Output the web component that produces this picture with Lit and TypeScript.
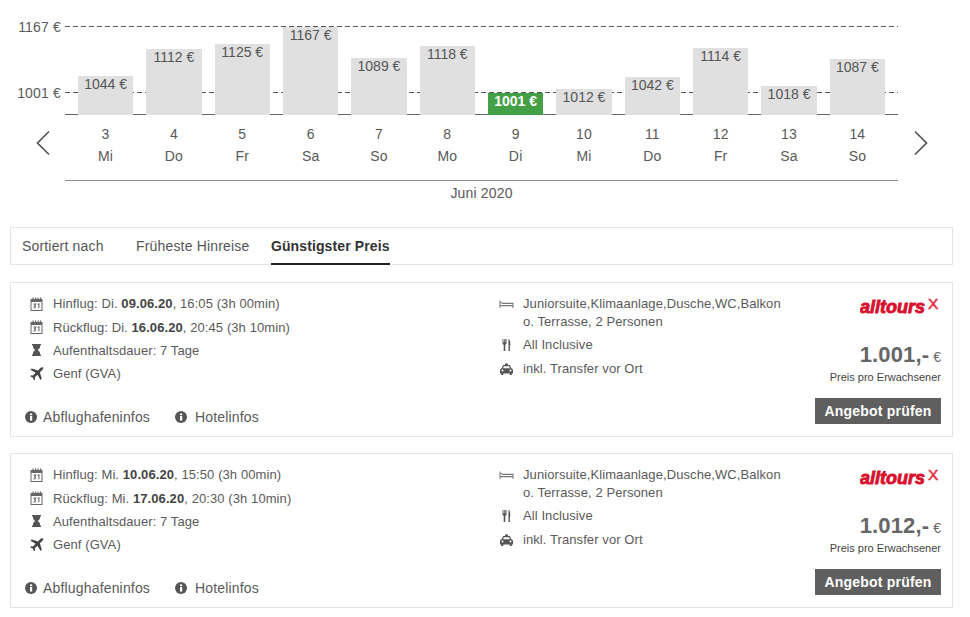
import { LitElement, html, css, svg } from "lit";
import { customElement } from "lit/decorators.js";

const BARS = [
  [3, "Mi", 1044], [4, "Do", 1112], [5, "Fr", 1125], [6, "Sa", 1167],
  [7, "So", 1089], [8, "Mo", 1118], [9, "Di", 1001], [10, "Mi", 1012],
  [11, "Do", 1042], [12, "Fr", 1114], [13, "Sa", 1018], [14, "So", 1087],
] as [number, string, number][];

const I = {
  cal: svg`<svg class="ic" viewBox="0 0 14 14" width="14" height="14"><path fill="#666" d="M1 2h2V.5h1.200V2h1.300V.5h1.200V2h1.300V.5h1.200V2H10.500V.5h1.200V2H13v12H1zM2 5v8h10V5z"/><path fill="none" stroke="#666" stroke-width="1.100" d="M4 7h2.200L5 8.600c1.400 0 1.400 2.600-1 2.200M8.200 7.600 9.400 7v4.200"/></svg>`,
  glass: svg`<svg class="ic" viewBox="0 0 14 14" width="14" height="14"><path fill="#555" d="M2.500 1h9v1.400h-1V4c0 1.600-1.700 2.300-2.300 3 .6.700 2.300 1.400 2.300 3v1.600h1V13h-9v-1.400h1V10c0-1.600 1.700-2.300 2.300-3-.6-.7-2.300-1.400-2.300-3V2.400h-1z"/></svg>`,
  plane: svg`<svg class="ic" viewBox="0 0 14 14" width="15" height="14"><path fill="#444" d="M13.600.6c-.7-.6-2.100-.2-3 .7L8.500 3.400 2.200 1.500 1 2.700l5.100 3.100-2.600 2.700-1.800-.3L.6 9.300l2.600 1.300 1.300 2.700 1.100-1.100-.3-1.900 2.700-2.600 3.100 5.200 1.200-1.200-2-6.400 2.200-2.100c.9-.9 1.700-2.200 1.100-3z"/></svg>`,
  bed: svg`<svg class="ic" viewBox="0 0 14 14" width="15" height="14"><path fill="#777" d="M0 3.500h1v1.700h1.500V5.700H14V11h-1V9.300H1V11H0zM1 6.200v1.900h12V6.900H2.500v-.7z"/></svg>`,
  food: svg`<svg class="ic" viewBox="0 0 14 14" width="14" height="14"><path fill="#555" d="M3 1h.8v3.200h.6V1h.8v3.200h.6V1H7v4.200c0 .8-.6 1.300-1.200 1.500V13H4.200V6.700C3.600 6.500 3 6 3 5.200zM9 1c1.200.3 1.800 2 1.800 4.500v2h-.4V13H9z"/></svg>`,
  taxi: svg`<svg class="ic" viewBox="0 0 14 14" width="15" height="14"><path fill="#555" fill-rule="evenodd" d="M5.500 1.500h3V3h1.300c.5 0 .8.300 1 .7L11.800 6.200c.9.200 1.700 1 1.700 2v3.300h-1.200V13h-2.100v-1.500H3.800V13H1.700v-1.500H.5V8.200c0-1 .8-1.800 1.700-2L3.200 3.700c.2-.4.500-.7 1-.7h1.300zM4.400 4.300l-.8 1.900h6.800l-.8-1.900zM3 7.500a1 1 0 1 0 0 2 1 1 0 0 0 0-2zm8 0a1 1 0 1 0 0 2 1 1 0 0 0 0-2z"/></svg>`,
  info: svg`<svg class="info" viewBox="0 0 12 12" width="12" height="12"><circle cx="6" cy="6" r="6" fill="#555"/><rect x="5" y="5" width="2.200" height="4.600" fill="#fff"/><rect x="5" y="2.400" width="2.200" height="1.800" fill="#fff"/></svg>`,
};

@customElement("app-root")
export class AppRoot extends LitElement {
  static styles = css`
    :host { display: block; width: 970px; height: 617px; overflow: hidden; background: #fff;
      font-family: "Liberation Sans", Arial, sans-serif; font-size: 14px; color: #5a5a5a; letter-spacing: .17px; }
    .chart { display: flex; flex-direction: column; padding: 16px 0 0 0; height: 211px; box-sizing: border-box; }
    .plot-row { display: flex; height: 99px; }
    .axis { width: 65px; position: relative; flex: none; }
    .axis span { position: absolute; right: 4px; font-size: 14px; color: #595959; line-height: 16px; }
    .plot { position: relative; width: 833px; height: 99px; box-sizing: border-box; }
    .dash { position: absolute; left: 0; right: 0; height: 1px;
      background: repeating-linear-gradient(90deg, #555 0 5px, transparent 5px 8px); }
    .base { position: absolute; left: 0; right: 0; bottom: 0; border-top: 1px solid #666; }
    .bars { position: absolute; inset: 0; display: flex; align-items: flex-end; padding: 0 13px; gap: 13.200px; }
    .bar { flex: 1; background: #e0e0e0; text-align: center; line-height: 16px; color: #555; letter-spacing: 0; }
    .bar.low { background: #43a047; color: #fff; font-weight: bold; }
    .bar span { display: block; }
    .days-row { display: flex; align-items: center; height: 44px; margin-top: 8px; }
    .nav { flex: none; display: flex; }
    .nav svg { margin-top: -4px; }
    .nav.l { width: 65px; justify-content: flex-end; padding-right: 15px; box-sizing: border-box; }
    .nav.r { padding-left: 16px; }
    .days { width: 833px; flex: none; box-sizing: border-box; display: flex; gap: 13.200px; padding: 0 13px; }
    .day { flex: 1; text-align: center; line-height: 22px; color: #595959; }
    .month { margin: 13px 0 0 65px; width: 833px; border-top: 1px solid #8a8a8a; text-align: center; padding-top: 4px; line-height: 16px; color: #595959; }

    .sort { margin: 16px 0 0 10px; width: 943px; height: 38px; box-sizing: border-box; border: 1px solid #e4e4e4;
      display: flex; align-items: stretch; color: #555; line-height: 36px; }
    .sort .lbl { margin-left: 11px; width: 114px; }
    .sort .tab { margin-right: 21.500px; }
    .sort .act { font-weight: bold; color: #333; border-bottom: 2px solid #222; height: 37px; box-sizing: border-box; letter-spacing: .12px; }

    .card { margin: 17px 0 0 10px; width: 943px; height: 155px; box-sizing: border-box; border: 1px solid #e4e4e4;
      display: flex; position: relative; }
    .card + .card { margin-top: 16px; }
    .col1 { width: 488px; padding: 9.200px 0 0 18px; box-sizing: border-box; display: flex; flex-direction: column; }
    .row { display: flex; align-items: center; height: 23.300px; gap: 9px; font-size: 13px; letter-spacing: .085px; }
    .ic { flex: none; width: 15px; }
    .row b { color: #444; }
    .links { display: flex; gap: 25px; margin: 21.800px 0 0 -4px; }
    .links div { display: flex; align-items: center; gap: 6px; line-height: 20px; }
    .links div + div { gap: 8px; }
    .info { flex: none; }
    .col2 { width: 304px; padding: 12px 0 0 0; box-sizing: border-box; font-size: 13px; letter-spacing: .085px; }
    .hrow { display: flex; gap: 9px; margin-bottom: 5.400px; line-height: 18px; }
    .hrow .ic { margin-top: 2px; }
    .col3 { flex: 1; display: flex; flex-direction: column; align-items: flex-end; padding: 10px 11px 0 0; }
    .logo { display: block; }
    .logo text.a { font: italic 700 18px "Liberation Sans", sans-serif; fill: #d8102c; stroke: #d8102c; stroke-width: .9px; letter-spacing: 0; }
    .logo text.x { font: 400 15.500px "Liberation Sans", sans-serif; fill: #e8354a; stroke: #e8354a; stroke-width: .6px; letter-spacing: 0; }
    .price { margin-top: 25px; display: flex; align-items: baseline; gap: 4px; font-size: 22px; line-height: 26px; font-weight: bold; color: #666; white-space: nowrap; letter-spacing: .15px; }
    .price small { font-size: 14px; font-weight: normal; letter-spacing: 0; }
    .pp { font-size: 11px; line-height: 14px; color: #444; margin-top: 0; letter-spacing: 0; }
    .btn { margin-top: 14px; width: 126px; height: 26px; background: #5f5f5f; color: #fff; font-weight: bold; text-align: center; line-height: 26px; font-size: 14px; letter-spacing: .2px; }
  `;

  card(date1: string, time1: string, wd1: string, date2: string, time2: string, wd2: string, price: string) {
    return html`<div class="card">
      <div class="col1">
        <div class="row">${I.cal}<span>Hinflug: ${wd1} <b>${date1}</b>, ${time1} (3h 00min)</span></div>
        <div class="row">${I.cal}<span>Rückflug: ${wd2} <b>${date2}</b>, ${time2} (3h 10min)</span></div>
        <div class="row">${I.glass}<span>Aufenthaltsdauer: 7 Tage</span></div>
        <div class="row">${I.plane}<span>Genf (GVA)</span></div>
        <div class="links">
          <div>${I.info}<span>Abflughafeninfos</span></div>
          <div>${I.info}<span>Hotelinfos</span></div>
        </div>
      </div>
      <div class="col2">
        <div class="hrow">${I.bed}<span>Juniorsuite,Klimaanlage,Dusche,WC,Balkon<br>o. Terrasse, 2 Personen</span></div>
        <div class="hrow">${I.food}<span>All Inclusive</span></div>
        <div class="hrow">${I.taxi}<span>inkl. Transfer vor Ort</span></div>
      </div>
      <div class="col3">
        <svg class="logo" width="81" height="24" viewBox="0 0 81 24">
          <text class="a" x="0" y="20">alltours</text>
          <text class="x" x="68" y="16">X</text>
        </svg>
        <div class="price"><span>${price},-</span><small>€</small></div>
        <div class="pp">Preis pro Erwachsener</div>
        <div class="btn">Angebot prüfen</div>
      </div>
    </div>`;
  }

  render() {
    return html`
      <div class="chart">
        <div class="plot-row">
          <div class="axis"><span style="top:3px">1167 €</span><span style="top:69px">1001 €</span></div>
          <div class="plot">
            <div class="dash" style="top:10px"></div>
            <div class="dash" style="top:76px"></div>
            <div class="base"></div>
            <div class="bars">
              ${BARS.map(([, , p]) => html`<div class="bar ${p === 1001 ? "low" : ""}" style="height:${22 + (p - 1001) * 0.3976}px"><span>${p} €</span></div>`)}
            </div>
          </div>
        </div>
        <div class="days-row">
          <div class="nav l"><svg width="15" height="26" viewBox="0 0 15 26"><path d="M14 1.500 2.500 13 14 24.500" fill="none" stroke="#555" stroke-width="1.700"/></svg></div>
          <div class="days">${BARS.map(([d, w]) => html`<div class="day">${d}<br>${w}</div>`)}</div>
          <div class="nav r"><svg width="15" height="26" viewBox="0 0 15 26"><path d="M1 1.500 12.500 13 1 24.500" fill="none" stroke="#555" stroke-width="1.700"/></svg></div>
        </div>
        <div class="month">Juni 2020</div>
      </div>
      <div class="sort">
        <div class="lbl">Sortiert nach</div>
        <div class="tab">Früheste Hinreise</div>
        <div class="tab act">Günstigster Preis</div>
      </div>
      ${this.card("09.06.20", "16:05", "Di.", "16.06.20", "20:45", "Di.", "1.001")}
      ${this.card("10.06.20", "15:50", "Mi.", "17.06.20", "20:30", "Mi.", "1.012")}
    `;
  }
}
